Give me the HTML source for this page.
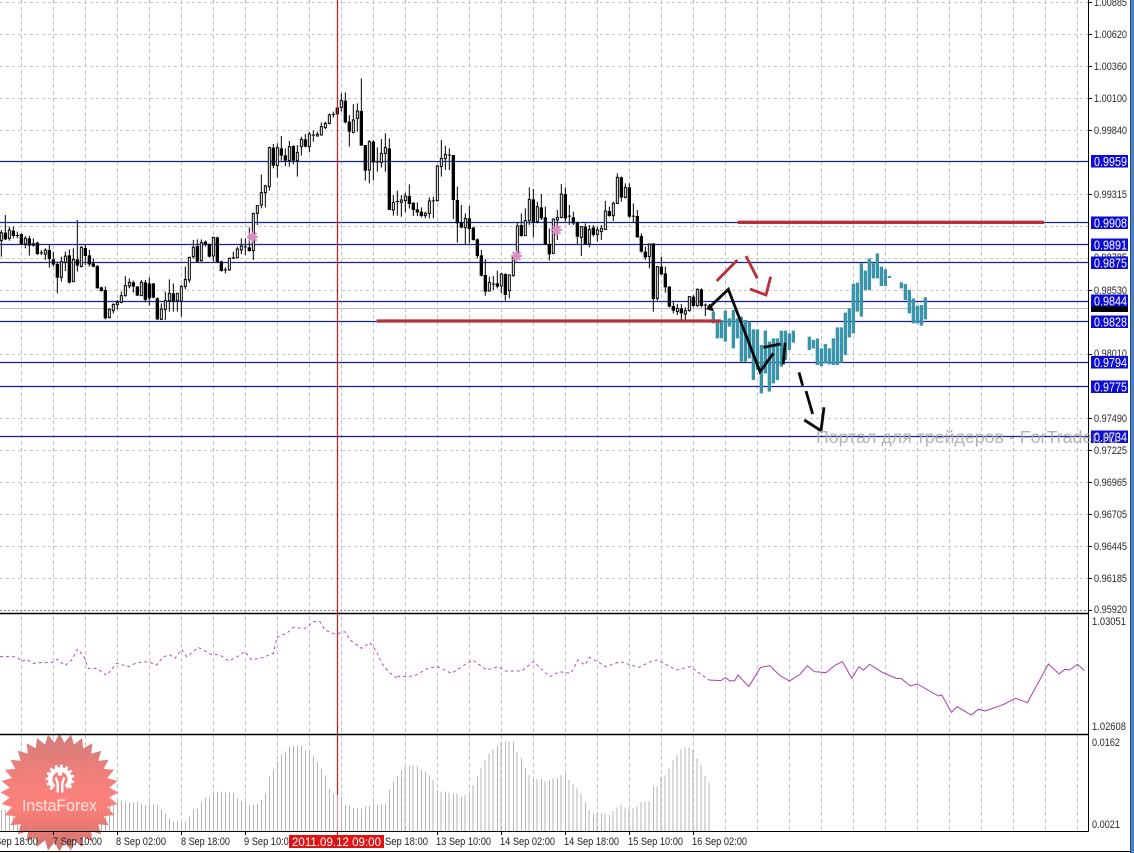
<!DOCTYPE html>
<html><head><meta charset="utf-8"><title>Chart</title>
<style>html,body{margin:0;padding:0;background:#fff}svg{display:block;filter:blur(.3px)}text{font-family:"Liberation Sans",sans-serif}</style></head>
<body>
<svg width="1134" height="853" viewBox="0 0 1134 853" xmlns="http://www.w3.org/2000/svg">
<rect width="1134" height="853" fill="#fff"/>
<!-- vertical grid -->
<path fill="none" stroke="#c4c4c4" stroke-dasharray="4 3" shape-rendering="crispEdges" d="M21.5 0V831M53.5 0V831M85.5 0V831M117.5 0V831M149.5 0V831M181.5 0V831M213.5 0V831M245.5 0V831M277.5 0V831M309.5 0V831M341.5 0V831M373.5 0V831M405.5 0V831M437.5 0V831M469.5 0V831M501.5 0V831M533.5 0V831M565.5 0V831M597.5 0V831M629.5 0V831M661.5 0V831M693.5 0V831M725.5 0V831M757.5 0V831M789.5 0V831M821.5 0V831M853.5 0V831M885.5 0V831M917.5 0V831M949.5 0V831M981.5 0V831M1013.5 0V831M1045.5 0V831M1077.5 0V831"/>
<!-- horizontal grid -->
<path fill="none" stroke="#c8c8c8" stroke-dasharray="3 3" shape-rendering="crispEdges" d="M0 2.5H1088M0 34.5H1088M0 66.5H1088M0 98.5H1088M0 130.5H1088M0 194.5H1088M0 226.5H1088M0 258.5H1088M0 290.5H1088M0 354.5H1088M0 418.5H1088M0 450.5H1088M0 482.5H1088M0 514.5H1088M0 546.5H1088M0 578.5H1088"/>
<path fill="none" stroke="#888" stroke-dasharray="2 2" d="M0 610.5H1088"/>
<path fill="none" stroke="#bbb" d="M0 308.5H1088"/>
<!-- blue horizontal levels -->
<path fill="none" stroke="#1a2090" stroke-width="1.2" d="M0 161.5H1088M0 222.5H1088M0 244.5H1088M0 262.5H1088M0 301.5H1088M0 321.5H1088M0 362.5H1088M0 386.5H1088M0 436.5H1088"/>
<!-- candles part 1 -->
<g transform="translate(0 70) scale(.33333)" fill="none" stroke="#000">
<path stroke-width="3" d="M4 480V560M16 435V510M28 470V512M40 470V505M52 485V505M64 490V522M76 498V535M88 497V557M100 505V530M112 515V555M124 540V555M136 535V570M148 525V593M160 545V590M172 575V670M184 560V635M196 545V603M208 538V640M220 535V635M232 450V605M244 528V592M256 525V585M268 540V590M280 565V592M292 585V655M304 650V665M316 650V748M328 715V745M340 700V730M352 690V718M364 665V700M376 618V680M388 625V655M400 632V668M412 648V678M424 630V678M436 630V697M448 622V707M460 640V685M472 682V750M484 700V750M496 665V750M508 628V725M520 640V725M532 670V725M544 645V740M556 590V658M568 560V638M580 510V565M592 508V578M604 508V575M616 512V530M628 520V563M640 500V575M652 500V578M664 572V605M676 592V610M688 563V602M700 545V567M712 530V565M724 505V552M736 505V555M748 472V545M760 428V570M772 405V465M784 313V415M796 345V412M808 230V362M820 222V295M832 220V322M844 198V272M856 235V288M868 213V290M880 225V283M892 225V320M904 200V257M916 192V232M928 185V247M940 182V215M952 185V200M964 157V197M976 155V177M988 130V163M1000 125V143M1012 110V135M1024 70V125M1036 67V160M1048 135V230M1060 102V190M1072 100V185M1084 25V227M1096 225V332M1108 210V340M1120 210V332M1132 232V305"/>
<path stroke-width="10" d="M16 488V508M40 482V498M52 495V498M64 492V522M88 505V527M100 520V527M112 518V552M124 547V550M148 540V567M160 568V584M172 582V623M208 556V638M232 568V587M256 534V558M268 556V583M280 580V590M292 588V655M304 652V663M316 660V745M400 637V650M412 650V677M436 637V690M448 640V685M460 640V683M472 685V748M520 670V694M592 528V575M616 515V522M628 522V560M652 502V577M664 574V603M676 598V601M700 562V566M736 529V532M748 532V543M820 233V287M844 235V257M856 256V272M880 228V272M916 208V230M940 194V197M1000 132V135M1012 113V133M1036 92V157M1048 155V185M1084 123V227M1096 225V302M1120 215V277M1132 274V277"/>
<path fill="#fff" stroke-width="3" d="M1 488h6V512h-6zM25 480h6V505h-6zM73 505h6V522h-6zM133 540h6V552h-6zM181 575h6V622h-6zM193 558h6V577h-6zM217 568h6V635h-6zM241 532h6V590h-6zM325 718h6V742h-6zM337 703h6V722h-6zM349 698h6V704h-6zM361 677h6V697h-6zM373 647h6V677h-6zM385 637h6V648h-6zM421 637h6V677h-6zM481 717h6V748h-6zM493 692h6V718h-6zM505 670h6V692h-6zM529 670h6V692h-6zM541 650h6V693h-6zM553 628h6V650h-6zM565 562h6V630h-6zM577 532h6V560h-6zM601 518h6V572h-6zM637 502h6V558h-6zM685 565h6V600h-6zM709 537h6V563h-6zM721 528h6V540h-6zM757 430h6V542h-6zM769 407h6V430h-6zM781 368h6V405h-6zM793 348h6V368h-6zM805 233h6V350h-6zM829 233h6V287h-6zM865 230h6V272h-6zM889 247h6V272h-6zM901 208h6V230h-6zM925 192h6V230h-6zM949 193h6V198h-6zM961 170h6V195h-6zM973 160h6V173h-6zM985 135h6V160h-6zM1021 92h6V112h-6zM1057 150h6V187h-6zM1069 123h6V145h-6zM1105 215h6V300h-6z"/>
</g>
<!-- candles part 2 -->
<g transform="translate(360 70) scale(.33333)" fill="none" stroke="#000">
<path stroke-width="3" d="M64 207V293M76 190V305M88 205V420M100 375V437M112 362V437M124 375V440M136 368V427M148 343V415M160 397V438M172 397V438M184 412V442M196 425V445M208 382V445M220 380V445M232 285V395M244 210V320M256 227V300M268 235V300M280 255V447M292 350V518M304 405V475M316 430V523M328 408V520M340 470V512M352 505V565M364 540V620M376 567V677M388 620V665M400 618V660M412 602V655M424 608V670M436 610V692M448 613V685M460 555V620M472 458V565M484 430V500M496 415V498M508 352V465M520 357V502M532 395V460M544 372V450M556 410V525M568 475V572M580 445V552M592 420V510M604 342V445M616 352V455M628 405V465M640 425V465M652 455V522M664 468V558M676 460V525M688 465V532M700 465V500M712 470V515M724 465V510M736 393V480M748 410V440M760 395V453M772 310V402M784 320V395M796 340V385M808 340V443M820 400V457M832 420V503M844 490V548M856 530V570M868 520V595M880 520V725M892 588V692M904 560V615M916 590V668M928 648V712M940 692V730M952 702V735M964 702V750M976 712V750M988 678V725M1000 675V712M1012 655V710M1024 655V712M1036 700V738M1048 702V720"/>
<path stroke-width="10" d="M88 235V420M112 393V396M148 378V402M160 398V420M172 418V427M184 425V438M220 391V394M268 254V257M280 255V390M292 390V460M304 458V473M328 445V477M340 473V510M352 508V558M364 556V617M376 615V665M400 641V644M412 640V650M436 612V675M484 465V498M520 388V458M544 412V445M556 442V522M568 522V553M616 372V445M628 437V440M640 442V460M652 458V500M676 470V522M700 472V495M748 423V438M784 322V383M808 352V440M820 437V440M832 438V502M844 498V545M856 545V562M880 520V687M904 590V613M916 610V652M928 650V710M940 708V722M964 715V730M1000 680V708M1024 658V708M1036 704V707M1048 706V716"/>
<path fill="#fff" stroke-width="3" d="M61 250h6V277h-6zM73 232h6V250h-6zM97 397h6V420h-6zM121 390h6V397h-6zM133 378h6V392h-6zM193 430h6V437h-6zM205 393h6V430h-6zM229 288h6V392h-6zM241 265h6V290h-6zM253 253h6V266h-6zM313 445h6V473h-6zM385 637h6V663h-6zM421 612h6V648h-6zM445 615h6V662h-6zM457 560h6V617h-6zM469 468h6V560h-6zM493 452h6V497h-6zM505 388h6V452h-6zM529 410h6V455h-6zM577 447h6V550h-6zM589 442h6V450h-6zM601 372h6V442h-6zM661 470h6V502h-6zM685 478h6V522h-6zM709 480h6V493h-6zM721 475h6V485h-6zM733 423h6V478h-6zM757 400h6V437h-6zM769 322h6V400h-6zM793 352h6V382h-6zM865 522h6V560h-6zM889 590h6V685h-6zM949 715h6V725h-6zM973 722h6V732h-6zM985 680h6V722h-6zM1009 658h6V707h-6z"/>
</g>
<!-- pink stars -->
<g fill="none" stroke="#d98dc4" stroke-width="2.2">
<path d="M247 237H258M252.5 231.5V242.5M248.5 233L256.5 241M256.5 233L248.5 241"/>
<path d="M511 256H522M516.5 250.5V261.5M512.5 252L520.5 260M520.5 252L512.5 260"/>
<path d="M551 230H562M556.5 224.5V235.5M552.5 226L560.5 234M560.5 226L552.5 234"/>
</g>
<!-- crosshair -->
<path d="M337.5 0V835" stroke="#d01c1c" stroke-width="1.2" fill="none"/>
<!-- teal bars -->
<g transform="translate(680 210) scale(.33333)" fill="none" stroke="#3b95aa" stroke-width="10">
<path d="M100 305V340M112 335V385M124 330V385M136 302V395M148 325V350M160 300V415M172 325V385M184 320V455M196 330V455M208 335V445M220 358V510M232 358V480M244 405V550M256 362V490M268 395V545M280 385V520M292 385V510M304 362V470M316 362V450M328 370V420M340 362V398M388 380V420M400 390V415M412 385V465M424 415V468M436 402V460M448 415V463M460 385V465M472 352V465M484 352V458M496 308V435M508 295V382M520 222V370M532 218V305M544 160V320M556 182V240M568 145V240M580 160V205M592 130V205M604 170V228M616 178V228M628 198V204M664 217V235M676 222V270M688 240V310M700 265V340M712 287V340M724 285V347M736 262V328"/>
<!-- thick red lines and strokes -->
<path stroke="#b6303a" stroke-width="10" d="M-910 333H123M173 37H1092"/>
<path stroke="#b6303a" stroke-width="8.5" d="M110 213L172 150M198 138L232 205M210 237L258 255L272 200"/>
<path stroke="#0a0a0a" stroke-width="8.5" d="M90 285L95 298L85 295L145 238L240 485L280 430M250 412L302 402M315 398L310 463M357 487L368 527M378 543L398 612M373 630L423 662L432 592"/>
</g>
<!-- RSI line -->
<g fill="none">
<g transform="translate(0 600) scale(.33333)">
<path vector-effect="non-scaling-stroke" stroke="#b24cb4" stroke-dasharray="3 3" d="M0 170L20 170L40 170L55 175L65 185L80 178L100 190L130 187L155 188L172 178L195 197L215 180L232 148L250 165L265 205L290 205L320 226L350 190L385 200L410 188L445 185L470 195L490 170L510 165L525 175L545 148L560 170L595 142L630 162L660 165L685 182L705 175L735 155L755 180L790 172L820 160L832 110L860 100L880 82L915 85L940 65L960 65L975 90L1005 103L1035 95L1050 120L1085 145L1110 128L1130 155L1145 190L1165 215L1195 238"/>
</g>
<g transform="translate(400 610) scale(.46819 .33333)">
<path vector-effect="non-scaling-stroke" stroke="#b24cb4" stroke-dasharray="3 3" d="M-6 198L0 200L30 198L60 175L80 170L110 190L155 150L185 180L210 170L225 183L260 183L285 155L320 200L340 185L365 190L380 150L395 165L405 142L440 170L470 155L510 172L535 155L550 150L590 180L620 170L650 200L660 210"/>
<path vector-effect="non-scaling-stroke" stroke="#a83cb0" d="M660 210L685 212L695 203L705 213L715 212L722 195L745 230L770 172L790 167L810 195L832 213L855 192L870 167L885 185L910 188L930 165L945 155L965 205L980 170L990 180L1003 163L1030 187L1060 205L1070 205L1090 228L1105 222L1150 258L1157 255L1178 307L1190 290L1220 315L1235 298L1250 303L1290 283L1315 265L1340 278L1385 162L1408 192L1420 178L1430 180L1447 163L1462 182"/>
</g>
<!-- volume bars -->
<g transform="translate(0 600) scale(.33333)">
<path vector-effect="non-scaling-stroke" stroke="#b4b4b4" shape-rendering="crispEdges" d="M4 630V693M16 630V693M28 630V693M40 628V693M52 628V693M64 625V693M76 625V693M88 625V693M100 622V693M112 620V693M124 620V693M136 620V693M148 618V693M160 618V693M172 618V693M184 618V693M196 620V693M208 620V693M220 620V693M232 618V693M244 618V693M256 618V693M268 615V693M280 615V693M292 612V693M304 610V693M316 608V693M328 606V693M340 604V693M352 602V693M364 602V693M376 607V693M388 608V693M400 608V693M412 605V693M424 612V693M436 615V693M448 608V693M460 612V693M472 615V693M484 628V693M496 640V693M508 655V693M520 665V693M532 665V693M544 663V693M556 665V693M568 650V693M580 628V693M592 625V693M604 608V693M616 592V693M628 590V693M640 577V693M652 575V693M664 577V693M676 578V693M688 578V693M700 578V693M712 595V693M724 603V693M736 605V693M748 617V693M760 615V693M772 612V693M784 600V693M796 580V693M808 530V693M820 510V693M832 483V693M844 465V693M856 455V693M868 440V693M880 436V693M892 436V693M904 438V693M916 450V693M928 458V693M940 470V693M952 487V693M964 505V693M976 527V693M988 567V693M1000 580V693M1012 585V693M1024 590V693M1036 617V693M1048 617V693M1060 623V693M1072 625V693M1084 625V693M1096 620V693M1108 618V693M1120 608V693M1132 615V693M1144 612V693M1156 610V693M1168 568V693M1180 545V693M1192 528V693"/>
</g>
<g transform="translate(400 610) scale(.46819 .33333)">
<path vector-effect="non-scaling-stroke" stroke="#b4b4b4" shape-rendering="crispEdges" d="M3 480V663M11 470V663M20 468V663M28 467V663M37 470V663M46 482V663M54 485V663M63 497V663M71 510V663M80 540V663M88 547V663M97 545V663M105 548V663M114 550V663M122 550V663M131 560V663M139 555V663M148 550V663M156 525V663M165 500V663M173 473V663M182 450V663M190 430V663M199 418V663M208 408V663M216 395V663M225 395V663M233 395V663M242 395V663M250 425V663M259 445V663M268 475V663M276 495V663M285 505V663M293 507V663M302 507V663M310 513V663M319 510V663M327 505V663M336 505V663M344 495V663M353 490V663M361 510V663M370 522V663M378 535V663M387 550V663M396 578V663M404 600V663M413 610V663M421 610V663M430 610V663M438 612V663M447 615V663M455 605V663M464 593V663M472 585V663M481 592V663M489 595V663M498 595V663M506 590V663M515 578V663M523 575V663M532 575V663M541 530V663M549 530V663M558 500V663M566 497V663M575 475V663M583 452V663M592 435V663M600 418V663M609 413V663M617 413V663M626 420V663M634 445V663M643 465V663M651 498V663M660 518V663"/>
</g>
</g>
<!-- logo -->
<defs><linearGradient id="lg" x1="0" y1="0" x2="0" y2="1"><stop offset="0" stop-color="#cc6e6a"/><stop offset=".35" stop-color="#f0716c"/><stop offset=".62" stop-color="#ff736c"/><stop offset="1" stop-color="#cc6460"/></linearGradient></defs>
<g transform="translate(59.5 792.5)">
<polygon fill="url(#lg)" fill-opacity=".9" points="59,0 49.8,4.9 57.9,11.5 47.8,14.5 54.5,22.6 44.1,23.6 49.1,32.8 38.7,31.7 41.7,41.7 31.7,38.7 32.8,49.1 23.6,44.1 22.6,54.5 14.5,47.8 11.5,57.9 4.9,49.8 0,59 -4.9,49.8 -11.5,57.9 -14.5,47.8 -22.6,54.5 -23.6,44.1 -32.8,49.1 -31.7,38.7 -41.7,41.7 -38.7,31.7 -49.1,32.8 -44.1,23.6 -54.5,22.6 -47.8,14.5 -57.9,11.5 -49.8,4.9 -59,0 -49.8,-4.9 -57.9,-11.5 -47.8,-14.5 -54.5,-22.6 -44.1,-23.6 -49.1,-32.8 -38.7,-31.7 -41.7,-41.7 -31.7,-38.7 -32.8,-49.1 -23.6,-44.1 -22.6,-54.5 -14.5,-47.8 -11.5,-57.9 -4.9,-49.8 0,-59 4.9,-49.8 11.5,-57.9 14.5,-47.8 22.6,-54.5 23.6,-44.1 32.8,-49.1 31.7,-38.7 41.7,-41.7 38.7,-31.7 49.1,-32.8 44.1,-23.6 54.5,-22.6 47.8,-14.5 57.9,-11.5 49.8,-4.9"/>
<g transform="translate(.5 -13)" fill="none" stroke="#fff">
<path stroke-width="4.5" d="M-6 7.5A9.8 9.8 0 1 1 6 7.5"/>
<path stroke-width="3.5" stroke-dasharray="2.6 2.6" d="M-7.5 9.5A12.5 12.5 0 1 1 7.5 9.5"/>
<circle cx="0" cy="-6" r="2.4" fill="#fff" stroke="none"/>
<path stroke-width="2.4" d="M-4.5 -2C-3 1 -2.2 3 -2.2 6V13M4.5 -2C3 1 2.2 3 2.2 6V13"/>
</g>
<text x="-37.5" y="18.5" font-size="17" fill="#ffe6e0" textLength="75" lengthAdjust="spacingAndGlyphs">InstaForex</text>
</g>
<!-- pane frames -->
<path fill="none" stroke="#000" stroke-width="1.6" d="M0 613.5H1088.5M0 734.5H1088.5"/>
<path fill="none" stroke="#000" stroke-width="1" d="M0 831.5H1088.5M1088.5 0V831.5M0 851.5H1130"/>
<!-- right axis ticks -->
<path fill="none" stroke="#000" d="M1088 2.5h4M1088 34.5h4M1088 66.5h4M1088 98.5h4M1088 130.5h4M1088 194.5h4M1088 290.5h4M1088 354.5h4M1088 418.5h4M1088 450.5h4M1088 482.5h4M1088 514.5h4M1088 546.5h4M1088 578.5h4M1088 610.5h4M53.5 831v4M117.5 831v4M181.5 831v4M245.5 831v4M437.5 831v4M501.5 831v4M565.5 831v4M629.5 831v4M693.5 831v4"/>
<!-- right axis labels -->
<g font-size="11" fill="#2a2a2a">
<text x="1094" y="6" textLength="33" lengthAdjust="spacingAndGlyphs">1.00885</text>
<text x="1094" y="38" textLength="33" lengthAdjust="spacingAndGlyphs">1.00620</text>
<text x="1094" y="70" textLength="33" lengthAdjust="spacingAndGlyphs">1.00360</text>
<text x="1094" y="102" textLength="33" lengthAdjust="spacingAndGlyphs">1.00100</text>
<text x="1094" y="134" textLength="33" lengthAdjust="spacingAndGlyphs">0.99840</text>
<text x="1094" y="198" textLength="33" lengthAdjust="spacingAndGlyphs">0.99315</text>
<text x="1094" y="261" textLength="33" lengthAdjust="spacingAndGlyphs">0.98785</text>
<text x="1094" y="294" textLength="33" lengthAdjust="spacingAndGlyphs">0.98530</text>
<text x="1094" y="357" textLength="33" lengthAdjust="spacingAndGlyphs">0.98010</text>
<text x="1094" y="422" textLength="33" lengthAdjust="spacingAndGlyphs">0.97490</text>
<text x="1094" y="454" textLength="33" lengthAdjust="spacingAndGlyphs">0.97225</text>
<text x="1094" y="486" textLength="33" lengthAdjust="spacingAndGlyphs">0.96965</text>
<text x="1094" y="518" textLength="33" lengthAdjust="spacingAndGlyphs">0.96705</text>
<text x="1094" y="550" textLength="33" lengthAdjust="spacingAndGlyphs">0.96445</text>
<text x="1094" y="582" textLength="33" lengthAdjust="spacingAndGlyphs">0.96185</text>
<text x="1094" y="613" textLength="33" lengthAdjust="spacingAndGlyphs">0.95920</text>
<text x="1092" y="625" textLength="34" lengthAdjust="spacingAndGlyphs">1.03051</text>
<text x="1092" y="730" textLength="34" lengthAdjust="spacingAndGlyphs">1.02608</text>
<text x="1092" y="746" textLength="28" lengthAdjust="spacingAndGlyphs">0.0162</text>
<text x="1092" y="828" textLength="28" lengthAdjust="spacingAndGlyphs">0.0021</text>
</g>
<!-- price tags -->
<rect x="1091" y="304" width="37" height="8" fill="#000"/>
<g fill="#0c0cd2">
<rect x="1091" y="155" width="37" height="12.5"/>
<rect x="1091" y="216.5" width="37" height="12.5"/>
<rect x="1091" y="238.5" width="37" height="12.5"/>
<rect x="1091" y="256.5" width="37" height="12.5"/>
<rect x="1091" y="294.5" width="37" height="12"/>
<rect x="1091" y="315.5" width="37" height="12.5"/>
<rect x="1091" y="356" width="37" height="12.5"/>
<rect x="1091" y="380.5" width="37" height="12.5"/>
<rect x="1091" y="430.5" width="37" height="12.5"/>
</g>
<g font-size="12.5" fill="#fff">
<text x="1094" y="166" textLength="33" lengthAdjust="spacingAndGlyphs">0.9959</text>
<text x="1094" y="227.5" textLength="33" lengthAdjust="spacingAndGlyphs">0.9908</text>
<text x="1094" y="249.5" textLength="33" lengthAdjust="spacingAndGlyphs">0.9891</text>
<text x="1094" y="267.5" textLength="33" lengthAdjust="spacingAndGlyphs">0.9875</text>
<text x="1094" y="305.5" textLength="33" lengthAdjust="spacingAndGlyphs">0.9844</text>
<text x="1094" y="326.5" textLength="33" lengthAdjust="spacingAndGlyphs">0.9828</text>
<text x="1094" y="367" textLength="33" lengthAdjust="spacingAndGlyphs">0.9794</text>
<text x="1094" y="391.5" textLength="33" lengthAdjust="spacingAndGlyphs">0.9775</text>
<text x="1094" y="441.5" textLength="33" lengthAdjust="spacingAndGlyphs">0.9734</text>
</g>
<!-- watermark -->
<text x="816" y="443" font-size="17.8" fill="#ababab" fill-opacity=".9">Портал для трейдеров - ForTrader.ru</text>
<!-- time labels -->
<g font-size="11" fill="#222">
<text x="-5" y="845" textLength="43" lengthAdjust="spacingAndGlyphs">Sep 18:00</text>
<text x="53" y="845" textLength="49" lengthAdjust="spacingAndGlyphs">7 Sep 10:00</text>
<text x="116" y="845" textLength="50" lengthAdjust="spacingAndGlyphs">8 Sep 02:00</text>
<text x="181" y="845" textLength="49" lengthAdjust="spacingAndGlyphs">8 Sep 18:00</text>
<text x="244" y="845" textLength="50" lengthAdjust="spacingAndGlyphs">9 Sep 10:00</text>
<text x="385" y="845" textLength="43" lengthAdjust="spacingAndGlyphs">Sep 18:00</text>
<text x="436" y="845" textLength="55" lengthAdjust="spacingAndGlyphs">13 Sep 10:00</text>
<text x="500" y="845" textLength="55" lengthAdjust="spacingAndGlyphs">14 Sep 02:00</text>
<text x="564" y="845" textLength="55" lengthAdjust="spacingAndGlyphs">14 Sep 18:00</text>
<text x="628" y="845" textLength="55" lengthAdjust="spacingAndGlyphs">15 Sep 10:00</text>
<text x="692" y="845" textLength="55" lengthAdjust="spacingAndGlyphs">16 Sep 02:00</text>
</g>
<rect x="289" y="835" width="95" height="13" fill="#e01414"/>
<text x="292" y="846" font-size="11.5" fill="#fff" textLength="89" lengthAdjust="spacingAndGlyphs">2011.09.12 09:00</text>
<!-- right edge -->
<rect x="1130" y="0" width="4" height="853" fill="#4d7fb8"/>
<rect x="1130" y="0" width="1" height="853" fill="#2a528e"/>
</svg>
</body></html>
